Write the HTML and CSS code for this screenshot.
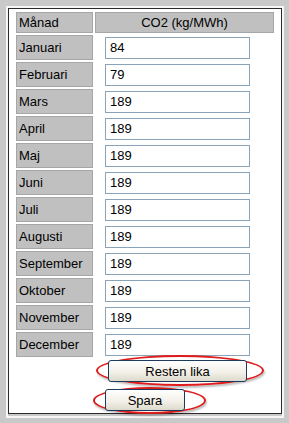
FILE: index.html
```html
<!DOCTYPE html>
<html lang="sv">
<head>
  <meta charset="UTF-8">
  <title>CO2 per månad</title>
  <link rel="stylesheet" href="styles.css">
</head>
<body>

<div class="frame">
  <div class="panel">
    <div class="grid">
      <div class="head">Månad</div>
      <div class="head center">CO2 (kg/MWh)</div>

      <div class="label">Januari</div>
      <div class="value"><input type="text" value="84"></div>
      <div class="label">Februari</div>
      <div class="value"><input type="text" value="79"></div>
      <div class="label">Mars</div>
      <div class="value"><input type="text" value="189"></div>
      <div class="label">April</div>
      <div class="value"><input type="text" value="189"></div>
      <div class="label">Maj</div>
      <div class="value"><input type="text" value="189"></div>
      <div class="label">Juni</div>
      <div class="value"><input type="text" value="189"></div>
      <div class="label">Juli</div>
      <div class="value"><input type="text" value="189"></div>
      <div class="label">Augusti</div>
      <div class="value"><input type="text" value="189"></div>
      <div class="label">September</div>
      <div class="value"><input type="text" value="189"></div>
      <div class="label">Oktober</div>
      <div class="value"><input type="text" value="189"></div>
      <div class="label">November</div>
      <div class="value"><input type="text" value="189"></div>
      <div class="label">December</div>
      <div class="value"><input type="text" value="189"></div>
    </div>

    <div class="actions">
      <div class="marked wide">
        <button class="btn btn-wide">Resten lika</button>
      </div>
      <div class="marked small">
        <button class="btn btn-small">Spara</button>
      </div>
    </div>
  </div>
</div>

</body>
</html>
```

FILE: styles.css
```css
body {
  margin: 0;
  background: #c9c9c9;
  font-family: Tahoma, "Liberation Sans", "DejaVu Sans", sans-serif;
  font-size: 13px;
  color: #000;
}

.frame {
  margin: 6px 5px 0 6px;
  width: 274px;
  height: 408px;
  border: 2px solid #f6f6f6;
}

.panel {
  height: 406px;
  border: 1px solid #2b2b2b;
  background: #fff;
  padding: 3px 0 0 7px;
  box-sizing: border-box;
}

.grid {
  display: grid;
  grid-template-columns: 77px 179px;
  grid-template-rows: 21px;
  grid-auto-rows: 25px;
  column-gap: 2px;
  row-gap: 2px;
}

.head, .label {
  background: #c0c0c0;
  border: 1px solid #a6a6a6;
  padding-left: 2px;
  display: flex;
  align-items: center;
}

.center {
  justify-content: center;
  padding-left: 0;
}

.value {
  display: flex;
  align-items: center;
  padding-left: 10px;
}

.value input {
  width: 145px;
  height: 22px;
  box-sizing: border-box;
  border: 1px solid #8aa3b9;
  padding: 0 4px;
  font-family: inherit;
  font-size: 13px;
  color: #000;
  margin: 0;
}

.actions {
  padding-top: 3px;
}

.marked {
  position: relative;
  height: 22px;
}

.marked.wide {
  margin-left: 92px;
  width: 139px;
}

.marked.small {
  margin-top: 7px;
  margin-left: 89px;
  width: 80px;
}

.marked::after {
  content: "";
  position: absolute;
  border: 2px solid #e01b1b;
  border-radius: 50%;
  box-shadow: 1px 2px 2px rgba(0, 0, 0, 0.25);
}

.marked.wide::after {
  left: -12px;
  top: -5px;
  width: 164px;
  height: 27px;
}

.marked.small::after {
  left: -12px;
  top: -2px;
  width: 109px;
  height: 23px;
}

.btn {
  position: relative;
  z-index: 1;
  width: 100%;
  height: 22px;
  border: 1px solid #1c3a5c;
  border-radius: 3px;
  background: linear-gradient(#ffffff, #f1efe6 60%, #dcd9cc);
  font-family: inherit;
  font-size: 13px;
  color: #000;
  padding: 0;
}
```
